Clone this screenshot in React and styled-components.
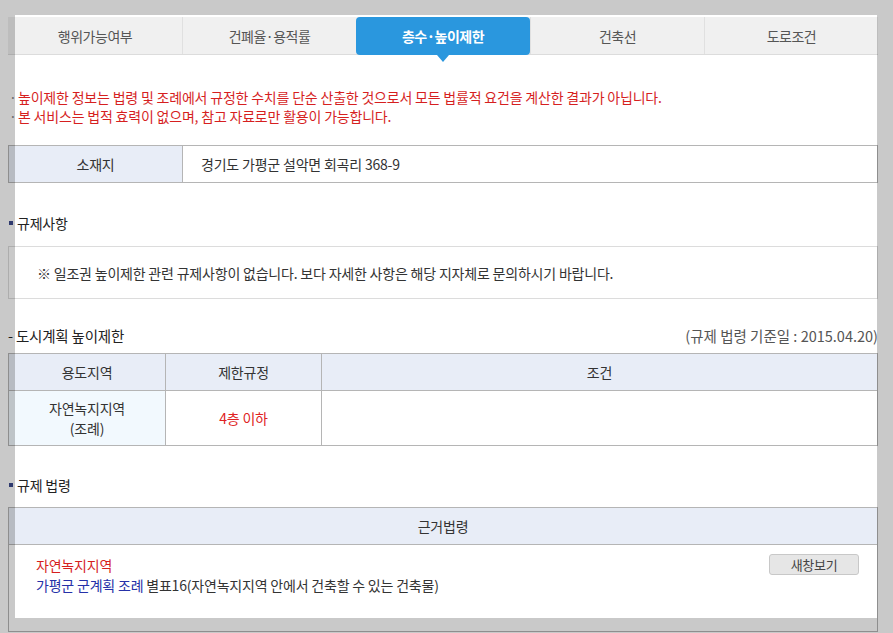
import React from "react";
import styled, { createGlobalStyle } from "styled-components";

const GlobalStyle = createGlobalStyle`
  html, body {
    margin: 0;
    padding: 0;
    background: #fff;
  }
  body {
    font-family: "Noto Sans CJK KR", "Noto Sans", sans-serif;
    color: #333;
    letter-spacing: -0.2px;
  }
  * {
    box-sizing: border-box;
  }
`;

const Page = styled.div`
  position: relative;
  width: 893px;
  height: 633px;
  overflow: hidden;
  padding: 17px 15px 0 8px;
`;

// dimmed frame that lies over the page edges
const Frame = styled.div`
  position: absolute;
  inset: 0;
  border-style: solid;
  border-color: rgba(0, 0, 0, 0.21);
  border-width: 15px 16px 15px 15px;
  pointer-events: none;
`;

const TabBar = styled.div`
  display: grid;
  grid-template-columns: repeat(5, 1fr);
  height: 38px;
  background: #f0f0f0;
  border-bottom: 1px solid #dcdcdc;
`;

const Tab = styled.div`
  position: relative;
  display: flex;
  align-items: center;
  justify-content: center;
  font-size: 14px;
  letter-spacing: -0.5px;
  color: ${(p) => (p.$active ? "#fff" : "#555")};
  font-weight: ${(p) => (p.$active ? 700 : 400)};
  background: ${(p) => (p.$active ? "#2a97de" : "transparent")};
  border-radius: ${(p) => (p.$active ? "4px" : "0")};
  border-left: ${(p) => (p.$first || p.$active ? "none" : "1px solid #e0e0e0")};
  margin-bottom: ${(p) => (p.$active ? "-1px" : "0")};

  &::after {
    content: "";
    display: ${(p) => (p.$active ? "block" : "none")};
    position: absolute;
    left: 50%;
    bottom: -7px;
    margin-left: -6px;
    border-left: 6px solid transparent;
    border-right: 6px solid transparent;
    border-top: 7px solid #2a97de;
  }
`;

const Notes = styled.ul`
  list-style: none;
  margin: 33px 0 19px;
  padding: 0;
`;

const Note = styled.li`
  position: relative;
  padding-left: 10px;
  font-size: 14px;
  line-height: 19px;
  color: #d61f1f;

  &::before {
    content: "·";
    position: absolute;
    left: 1px;
    color: #888;
  }
`;

const Table = styled.table`
  width: 100%;
  border-collapse: collapse;
  table-layout: fixed;
  border: 1px solid #b0b0b0;
  font-size: 14px;
`;

const Th = styled.th`
  height: 37px;
  padding: 0;
  font-weight: 400;
  color: #333;
  background: #e8edf7;
  border: 1px solid #b5b5b5;
  text-align: center;
`;

const Td = styled.td`
  padding: ${(p) => (p.$pad ? p.$pad : "0 18px")};
  border: 1px solid #b5b5b5;
  color: ${(p) => (p.$red ? "#e02222" : "#333")};
  background: ${(p) => (p.$tint ? "#f2f9fe" : "transparent")};
  text-align: ${(p) => (p.$center ? "center" : "left")};
  line-height: 18px;
`;

const CellLine = styled.div`
  line-height: 20px;
`;

const SectionTitle = styled.h3`
  display: flex;
  align-items: center;
  gap: 4px;
  margin: ${(p) => p.$margin};
  font-size: 14px;
  font-weight: 400;
  line-height: 20px;
  color: #222;

  &::before {
    content: "";
    width: 4px;
    height: 4px;
    margin-left: 1px;
    background: #3c4a8c;
  }
`;

const InfoBox = styled.div`
  height: 53px;
  display: flex;
  align-items: center;
  padding-left: 28px;
  border: 1px solid #dcdcdc;
  font-size: 14px;
  color: #333;
`;

const SubHead = styled.div`
  display: flex;
  justify-content: space-between;
  align-items: center;
  margin: 27px 0 7px;
  font-size: 14.5px;
  line-height: 20px;
  color: #222;
`;

const BaseDate = styled.span`
  font-size: 14.5px;
  letter-spacing: 0;
  color: #555;
`;

const LawBody = styled.div`
  display: flex;
  justify-content: space-between;
  align-items: flex-start;
  height: 76px;
`;

const LawLines = styled.div`
  font-size: 14px;
  line-height: 20px;
  color: #333;
`;

const Zone = styled.div`
  color: #d61f1f;
`;

const LawName = styled.span`
  color: #2631a8;
`;

const OpenButton = styled.button`
  width: 90px;
  height: 21px;
  margin-top: -1px;
  padding: 0;
  font-family: inherit;
  font-size: 13px;
  letter-spacing: -0.3px;
  color: #444;
  background: #e6e6e6;
  border: 1px solid #c8c8c8;
  border-radius: 3px;
`;

const tabs = ["행위가능여부", "건폐율·용적률", "층수·높이제한", "건축선", "도로조건"];

export default function App() {
  return (
    <>
      <GlobalStyle />
      <Page>
        <TabBar>
          {tabs.map((t, i) => (
            <Tab key={t} $first={i === 0} $active={i === 2}>
              {t}
            </Tab>
          ))}
        </TabBar>

        <Notes>
          <Note>높이제한 정보는 법령 및 조례에서 규정한 수치를 단순 산출한 것으로서 모든 법률적 요건을 계산한 결과가 아닙니다.</Note>
          <Note>본 서비스는 법적 효력이 없으며, 참고 자료로만 활용이 가능합니다.</Note>
        </Notes>

        <Table>
          <colgroup>
            <col style={{ width: 174 }} />
            <col />
          </colgroup>
          <tbody>
            <tr>
              <Th>소재지</Th>
              <Td>경기도 가평군 설악면 회곡리 368-9</Td>
            </tr>
          </tbody>
        </Table>

        <SectionTitle $margin="30px 0 13px">규제사항</SectionTitle>
        <InfoBox>※ 일조권 높이제한 관련 규제사항이 없습니다. 보다 자세한 사항은 해당 지자체로 문의하시기 바랍니다.</InfoBox>

        <SubHead>
          <span>- 도시계획 높이제한</span>
          <BaseDate>(규제 법령 기준일 : 2015.04.20)</BaseDate>
        </SubHead>
        <Table>
          <colgroup>
            <col style={{ width: 157 }} />
            <col style={{ width: 156 }} />
            <col />
          </colgroup>
          <thead>
            <tr>
              <Th>용도지역</Th>
              <Th>제한규정</Th>
              <Th>조건</Th>
            </tr>
          </thead>
          <tbody>
            <tr>
              <Td $tint $center $pad="7px 0">
                <CellLine>자연녹지지역</CellLine>
                <CellLine>(조례)</CellLine>
              </Td>
              <Td $red $center $pad="0">4층 이하</Td>
              <Td $pad="0" />
            </tr>
          </tbody>
        </Table>

        <SectionTitle $margin="29px 0 12px">규제 법령</SectionTitle>
        <Table>
          <thead>
            <tr>
              <Th>근거법령</Th>
            </tr>
          </thead>
          <tbody>
            <tr>
              <Td $pad="10px 18px 0 27px">
                <LawBody>
                  <LawLines>
                    <Zone>자연녹지지역</Zone>
                    <div>
                      <LawName>가평군 군계획 조례</LawName> 별표16(자연녹지지역 안에서 건축할 수 있는 건축물)
                    </div>
                  </LawLines>
                  <OpenButton>새창보기</OpenButton>
                </LawBody>
              </Td>
            </tr>
          </tbody>
        </Table>

        <Frame />
      </Page>
    </>
  );
}
